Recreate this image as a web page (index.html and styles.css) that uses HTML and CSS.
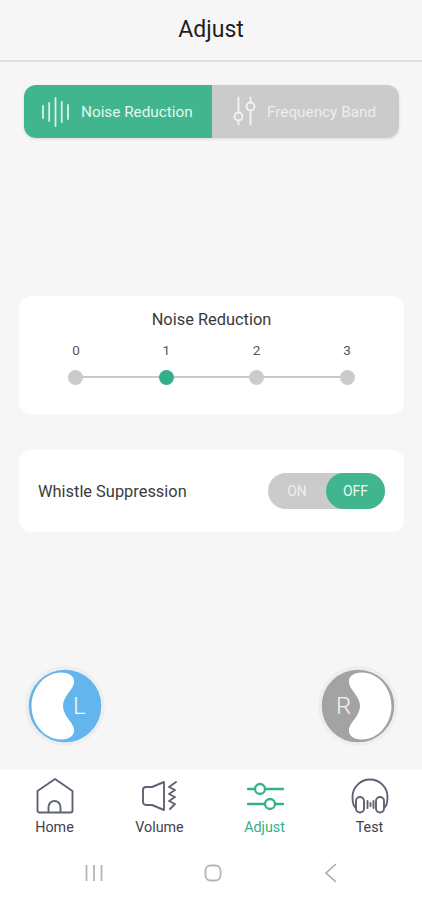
FILE: index.html
```html
<!DOCTYPE html>
<html>

<head>
    <title>Adjust</title>
    <link rel="stylesheet" href="styles.css">
</head>

<body>
    <div class="page">
        <header class="title-bar">Adjust</header>

        <div class="tabs">
            <div class="tab tab-active">
                <svg class="tab-icon" width="30" height="32" viewBox="0 0 30 32" fill="none" stroke="#d9f1e8" stroke-width="1.8" stroke-linecap="round">
                    <path d="M1 10v12M7.200 7v18M13.500 2v28M19.700 6v20M26 9v14"/>
                </svg>
                <span>Noise Reduction</span>
            </div>
            <div class="tab">
                <svg class="tab-icon" width="24" height="32" viewBox="0 0 24 32" fill="none" stroke="#f2f2f2" stroke-width="1.900" stroke-linecap="round">
                    <path d="M5.500 1.500V16.500M5.500 24.500V28.500M17.500 1.500V6.500M17.500 14.500V28.500"/>
                    <circle cx="5.500" cy="20.500" r="4"/>
                    <circle cx="17.500" cy="10.500" r="4"/>
                </svg>
                <span>Frequency Band</span>
            </div>
        </div>

        <section class="card card-noise">
            <div class="card-title">Noise Reduction</div>
            <div class="levels">
                <div class="level">0</div>
                <div class="level">1</div>
                <div class="level">2</div>
                <div class="level">3</div>
            </div>
            <div class="track">
                <span class="dot"></span>
                <span class="dot dot-on"></span>
                <span class="dot"></span>
                <span class="dot"></span>
            </div>
        </section>

        <section class="card card-whistle">
            <span class="whistle-label">Whistle Suppression</span>
            <div class="switch">
                <span class="switch-on">ON</span>
                <span class="switch-off">OFF</span>
            </div>
        </section>

        <div class="ears">
            <div class="ear">
                <svg width="80" height="80" viewBox="0 0 80 80">
                    <circle cx="40" cy="40" r="35.500" fill="#63b5ee" stroke="#63b5ee" stroke-width="1.500"/>
                    <path d="M36 6.500C45 6.500 50 11 49 17C48 24 38 30 38 40C38 50 48 56 49 63C50 69 45 73.500 36 73.500C20 73.500 6.500 58 6.500 40S20 6.500 36 6.500Z" fill="#fff"/>
                </svg>
                <span class="ear-letter ear-l">L</span>
            </div>
            <div class="ear">
                <svg width="80" height="80" viewBox="0 0 80 80">
                    <circle cx="40" cy="40" r="35.500" fill="#a3a3a3" stroke="#a3a3a3" stroke-width="1.500"/>
                    <path d="M44 6.500C35 6.500 30 11 31 17C32 24 42 30 42 40C42 50 32 56 31 63C30 69 35 73.500 44 73.500C60 73.500 73.500 58 73.500 40S60 6.500 44 6.500Z" fill="#fff"/>
                </svg>
                <span class="ear-letter ear-r">R</span>
            </div>
        </div>

        <nav class="bottom-nav">
            <div class="nav-item">
                <svg width="38" height="38" viewBox="0 0 38 38" fill="none" stroke="#5f6272" stroke-width="1.900" stroke-linejoin="round">
                    <path d="M19 2L36.500 14V33.500A2 2 0 0 1 34.500 35.500H3.500A2 2 0 0 1 1.500 33.500V14Z"/>
                    <path d="M12.500 35.500V30A6 6 0 0 1 24.500 30V35.500"/>
                </svg>
                <span>Home</span>
            </div>
            <div class="nav-item">
                <svg width="38" height="38" viewBox="0 0 38 38" fill="none" stroke="#5f6272" stroke-width="1.900" stroke-linejoin="round" stroke-linecap="round">
                    <path d="M5 10H11L23 5V33L11 28H5A3 3 0 0 1 2 25V13A3 3 0 0 1 5 10Z"/>
                    <path d="M35 5L28 10L34 13L28 17L34 20L28 24L34 27L29 32"/>
                </svg>
                <span>Volume</span>
            </div>
            <div class="nav-item nav-active">
                <svg width="38" height="38" viewBox="0 0 38 38" fill="none" stroke="#35b188" stroke-width="2.300" stroke-linecap="round">
                    <path d="M2 12H9M19 12H37M2 27H19M29 27H37"/>
                    <circle cx="14" cy="12" r="5"/>
                    <circle cx="24" cy="27" r="5"/>
                </svg>
                <span>Adjust</span>
            </div>
            <div class="nav-item">
                <svg width="38" height="38" viewBox="0 0 38 38" fill="none" stroke="#5f6272" stroke-width="1.900" stroke-linecap="round" stroke-linejoin="round">
                    <path d="M5 31C2 29 1.500 26 1.500 20A17.500 17.500 0 0 1 36.500 20C36.500 26 36 29 33 31"/>
                    <rect x="5" y="20" width="8" height="15.500" rx="4"/>
                    <rect x="25" y="20" width="8" height="15.500" rx="4"/>
                    <path d="M16.500 24V31M19.500 26V29M22.500 24V31"/>
                </svg>
                <span>Test</span>
            </div>
        </nav>

        <div class="system-bar">
            <svg width="18" height="18" viewBox="0 0 18 18" fill="none" stroke="#b5b5b7" stroke-width="1.800">
                <path d="M1.500 1V17M9 1V17M16.500 1V17"/>
            </svg>
            <svg width="18" height="18" viewBox="0 0 18 18" fill="none" stroke="#b5b5b7" stroke-width="1.800">
                <rect x="1.500" y="1.500" width="15" height="15" rx="5"/>
            </svg>
            <svg width="18" height="20" viewBox="0 0 18 20" fill="none" stroke="#a5a5a7" stroke-width="1.500">
                <path d="M14 1L4 10L14 19"/>
            </svg>
        </div>
    </div>
</body>

</html>
```

FILE: styles.css
```css
* {
    box-sizing: border-box;
}

body {
    margin: 0;
    font-family: 'Roboto', sans-serif;
    background: #f6f6f6;
}

.page {
    width: 422px;
    height: 900px;
    display: flex;
    flex-direction: column;
    overflow: hidden;
}

.title-bar {
    height: 62px;
    line-height: 59px;
    text-align: center;
    font-size: 23px;
    color: #1e1e1e;
    border-bottom: 2px solid #dedede;
}

.tabs {
    display: flex;
    height: 53px;
    margin: 23px 23px 0 24px;
    border-radius: 12px;
    overflow: hidden;
    box-shadow: 0 1px 3px rgb(0 0 0 / 12%);
}

.tab {
    flex: 0 0 188px;
    display: flex;
    align-items: center;
    padding-left: 18px;
    gap: 9px;
    background: #cbcbcb;
    color: #eeeeee;
    font-size: 15.300px;
}

.tab + .tab {
    flex: 1;
    padding-left: 21px;
    gap: 10px;
}

.tab-active {
    background: #40b58e;
    color: #e6f6f0;
}

.tab-icon {
    flex: none;
}

.card {
    margin: 0 18px 0 19px;
    background: #fff;
    border-radius: 12px;
}

.card-noise {
    height: 118px;
    margin-top: 158px;
    padding-top: 14px;
}

.card-title {
    text-align: center;
    font-size: 16.400px;
    line-height: 20px;
    color: #3a3a3a;
}

.levels {
    display: flex;
    justify-content: space-between;
    margin: 12px 47px 0 47px;
}

.level {
    width: 20px;
    text-align: center;
    font-size: 13.500px;
    line-height: 16px;
    color: #555555;
}

.track {
    display: flex;
    justify-content: space-between;
    align-items: center;
    height: 16px;
    margin: 11px 49px 0 49px;
    background: linear-gradient(#c9c9c9, #c9c9c9) center / 100% 2px no-repeat;
}

.dot {
    width: 15px;
    height: 15px;
    border-radius: 50%;
    background: #cbcbcb;
}

.dot-on {
    background: #2fb088;
}

.card-whistle {
    height: 82px;
    margin-top: 36px;
    display: flex;
    align-items: center;
    justify-content: space-between;
    padding: 0 19px 0 19px;
}

.whistle-label {
    font-size: 16.400px;
    color: #3c3c3c;
}

.switch {
    display: flex;
    width: 117px;
    height: 36px;
    border-radius: 18px;
    background: #cbcbcb;
    font-size: 14px;
    line-height: 36px;
    text-align: center;
}

.switch-on {
    width: 58px;
    color: #eeeeee;
}

.switch-off {
    width: 59px;
    border-radius: 18px;
    background: #40b58e;
    color: #eef9f5;
}

.ears {
    display: flex;
    justify-content: space-between;
    height: 80px;
    margin: 134px 24px 0 25px;
}

.ear {
    position: relative;
    width: 80px;
    height: 80px;
    border-radius: 50%;
    background: #eeeeee;
}

.ear svg {
    display: block;
}

.ear-letter {
    position: absolute;
    top: 26px;
    font-size: 24px;
    line-height: 28px;
    font-weight: 300;
    color: #f5f5f5;
}

.ear-l {
    left: 48px;
}

.ear-r {
    left: 18px;
}

.bottom-nav {
    display: flex;
    height: 78px;
    margin-top: 24px;
    padding: 7px 0 0 2px;
    background: #fff;
}

.nav-item {
    width: 105px;
    display: flex;
    flex-direction: column;
    align-items: center;
    font-size: 14.300px;
    line-height: 18px;
    color: #3f4150;
}

.nav-item svg {
    margin-bottom: 3px;
}

.nav-active {
    color: #35b188;
}

.system-bar {
    flex: 1;
    display: flex;
    justify-content: space-between;
    align-items: center;
    padding: 0 82px 2px 85px;
    background: #fff;
}
```
